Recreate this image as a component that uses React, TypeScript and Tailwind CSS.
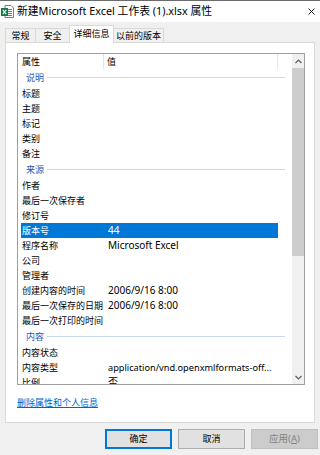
import React from 'react';

type Row =
  | { kind: 'group'; label: string }
  | { kind: 'item'; label: string; value?: string; selected?: boolean; tight?: boolean };

const rows: Row[] = [
  { kind: 'group', label: '说明' },
  { kind: 'item', label: '标题' },
  { kind: 'item', label: '主题' },
  { kind: 'item', label: '标记' },
  { kind: 'item', label: '类别' },
  { kind: 'item', label: '备注' },
  { kind: 'group', label: '来源' },
  { kind: 'item', label: '作者' },
  { kind: 'item', label: '最后一次保存者' },
  { kind: 'item', label: '修订号' },
  { kind: 'item', label: '版本号', value: '44', selected: true },
  { kind: 'item', label: '程序名称', value: 'Microsoft Excel' },
  { kind: 'item', label: '公司' },
  { kind: 'item', label: '管理者' },
  { kind: 'item', label: '创建内容的时间', value: '2006/9/16 8:00' },
  { kind: 'item', label: '最后一次保存的日期', value: '2006/9/16 8:00' },
  { kind: 'item', label: '最后一次打印的时间' },
  { kind: 'group', label: '内容' },
  { kind: 'item', label: '内容状态' },
  { kind: 'item', label: '内容类型', value: 'application/vnd.openxmlformats-off...', tight: true },
  { kind: 'item', label: '比例', value: '否' },
];

const tabs = [
  { label: '常规', w: 'w-[31px]' },
  { label: '安全', w: 'w-[35px]' },
  { label: '详细信息', w: 'w-[45px]', active: true },
  { label: '以前的版本', w: 'w-[51px]' },
];

function ExcelIcon() {
  return (
    <svg width="13" height="13" viewBox="0 0 13 13">
      <path d="M4 0.5h6l2.5 2.5v9.5H4z" fill="#fff" stroke="#7a7a7a" strokeWidth="1" />
      <path d="M7 4.5h4M7 6.5h4M7 8.5h4M7 10.5h4" stroke="#21a366" strokeWidth="1" />
      <rect x="0" y="3" width="7" height="8" fill="#107c41" />
      <path d="M1.8 4.8l3.4 4.4M5.2 4.8l-3.4 4.4" stroke="#fff" strokeWidth="1.2" />
    </svg>
  );
}

export default function App() {
  return (
    <div className="w-[320px] h-[455px] bg-[#f0f0f0] flex flex-col overflow-hidden text-black font-['Noto_Sans_CJK_SC','Noto_Sans',sans-serif]">
      {/* Title bar */}
      <div className="h-[22px] bg-white border-t border-[#6b6b6b] flex items-center pl-[1px] pr-[5px]">
        <ExcelIcon />
        <span className="ml-[3px] text-[10.8px] leading-none font-['Noto_Sans','Noto_Sans_CJK_SC',sans-serif]">
          新建Microsoft Excel 工作表 (1).xlsx 属性
        </span>
        <svg className="ml-auto" width="7" height="7" viewBox="0 0 7 7">
          <path d="M0.5 0.5l6 6M6.5 0.5l-6 6" stroke="#222" strokeWidth="1" />
        </svg>
      </div>

      {/* Tabs */}
      <div className="h-[20px] px-[5px] flex items-end">
        {tabs.map((t, i) => (
          <div
            key={t.label}
            className={`${t.w} ${i > 0 ? '-ml-px' : ''} flex items-center justify-center text-[9px] border border-b-0 border-[#d9d9d9] ${
              t.active ? 'h-[18px] bg-white relative z-10 -mb-px pb-[2px]' : 'h-[14px] bg-[#f0f0f0]'
            }`}
          >
            {t.label}
          </div>
        ))}
      </div>

      {/* Panel */}
      <div className="mx-[5px] h-[381px] bg-white border border-[#d9d9d9] flex flex-col">
        <div className="ml-[11px] mt-[10px] w-[288px] h-[332px] border border-[#a0a0a0] flex">
          <div className="flex-1 overflow-hidden">
            {/* Header */}
            <div className="h-[15px] flex text-[9px] leading-[15px]">
              <div className="w-[86px] pl-[4px] border-r border-[#e5e5e5]">属性</div>
              <div className="w-[174px] pl-[3px] border-r border-[#e5e5e5]">值</div>
            </div>
            {rows.map((r) =>
              r.kind === 'group' ? (
                <div key={r.label} className="h-[17px] flex items-center pl-[8px] pr-[7px]">
                  <span className="text-[9px] leading-none text-[#1f57b8]">{r.label}</span>
                  <div className="ml-[3px] flex-1 h-px bg-[#c8d8ee]" />
                </div>
              ) : (
                <div
                  key={r.label}
                  className={`ml-[3px] w-[257px] h-[15px] flex items-center ${r.selected ? 'bg-[#0078d7] text-white' : ''}`}
                >
                  <div className="w-[87px] pl-[1px] text-[9px] leading-none">{r.label}</div>
                  <div
                    className={`flex-1 min-w-0 whitespace-nowrap overflow-hidden leading-[15px] font-['Noto_Sans','Noto_Sans_CJK_SC',sans-serif] ${
                      r.tight ? 'text-[9.2px]' : 'text-[10px]'
                    }`}
                  >
                    {r.value ?? ''}
                  </div>
                </div>
              )
            )}
          </div>
          {/* Scrollbar */}
          <div className="w-[12px] bg-[#f0f0f0] flex flex-col">
            <div className="h-[14px] flex items-center justify-center">
              <svg width="7" height="5" viewBox="0 0 7 5">
                <path d="M0.5 4l3-3 3 3" fill="none" stroke="#606060" strokeWidth="1.2" />
              </svg>
            </div>
            <div className="h-[188px] bg-[#cdcdcd]" />
            <div className="flex-1" />
            <div className="h-[14px] flex items-center justify-center">
              <svg width="7" height="5" viewBox="0 0 7 5">
                <path d="M0.5 1l3 3 3-3" fill="none" stroke="#606060" strokeWidth="1.2" />
              </svg>
            </div>
          </div>
        </div>
        <a className="ml-[11px] mt-[12px] w-fit text-[9px] leading-[12px] text-[#0066cc] underline" href="#">
          删除属性和个人信息
        </a>
      </div>

      {/* Buttons */}
      <div className="mt-[6px] pl-[105px] flex gap-[6px]">
        <button className="w-[67px] h-[20px] bg-[#e1e1e1] border-2 border-[#0078d7] text-[9px]">确定</button>
        <button className="w-[67px] h-[20px] bg-[#e1e1e1] border border-[#adadad] text-[9px]">取消</button>
        <button className="w-[67px] h-[20px] bg-[#cccccc] border border-[#bfbfbf] text-[9.5px] text-[#838383] font-['Noto_Sans','Noto_Sans_CJK_SC',sans-serif]">
          应用(<span className="underline">A</span>)
        </button>
      </div>
    </div>
  );
}
